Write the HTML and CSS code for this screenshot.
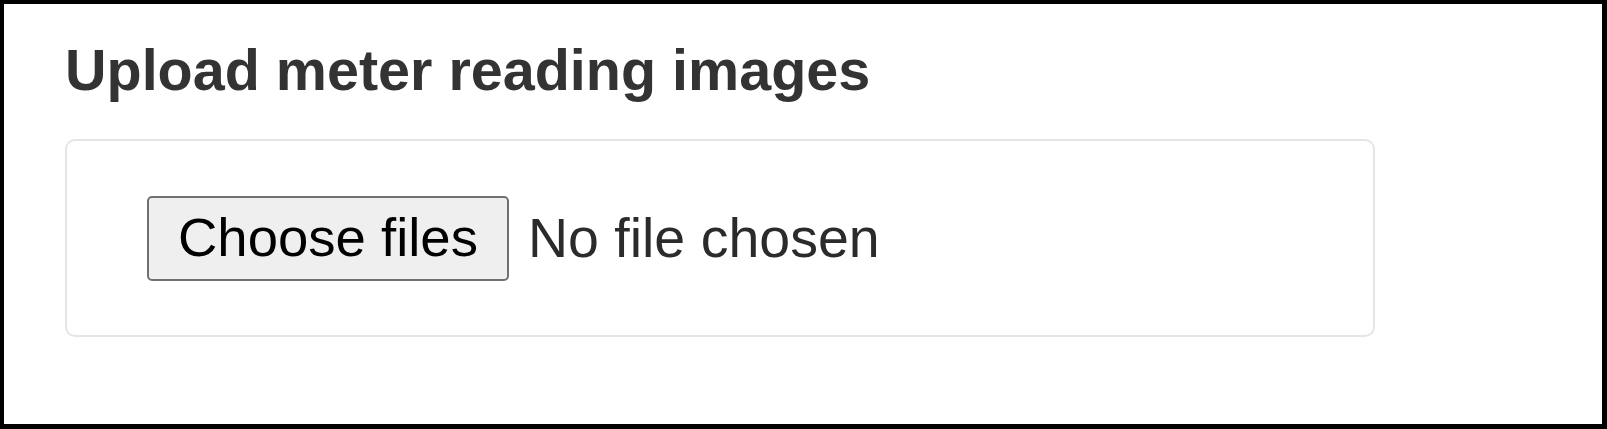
FILE: index.html
```html
<!DOCTYPE html>
<html lang="en">
<head>
  <meta charset="UTF-8" />
  <title>Upload meter reading images</title>
  <link rel="stylesheet" href="styles.css">
</head>
<body>

  <div class="frame">
    <!-- Heading -->
    <h2 class="upload-title">Upload meter reading images</h2>

    <!-- File picker box -->
    <div class="upload-box">
      <button type="button" class="choose-btn">Choose files</button>
      <span class="file-status">No file chosen</span>
    </div>
  </div>

</body>
</html>
```

FILE: styles.css
```css
body {
  margin: 0;
  background: #fff;
  font-family: "Liberation Sans", Arial, sans-serif;
}

/* Outer black frame round the whole shot */
.frame {
  width: 1607px;
  height: 429px;
  box-sizing: border-box;
  border: 4px solid #000;
  border-right-width: 5px;
  border-bottom-width: 5px;
  padding: 0 61px;
}

/* Heading */
.upload-title {
  margin: 33px 0 36px;
  font-size: 57.5px;
  font-weight: 700;
  line-height: 1.15;
  color: #333;
}

/* Rounded box that holds the file input */
.upload-box {
  display: flex;
  align-items: center;
  width: 1310px;
  height: 198px;
  box-sizing: border-box;
  border: 2px solid #e5e5e5;
  border-radius: 10px;
  padding-left: 80px;
}

/* Native-looking "Choose files" button */
.choose-btn {
  font-family: "Liberation Sans", Arial, sans-serif;
  font-size: 54.5px;
  line-height: 62px;
  padding: 9px 29px 10px;
  border: 2px solid #707070;
  border-radius: 5px;
  background: #efefef;
  color: #000;
}

.file-status {
  margin-left: 19px;
  font-size: 55.5px;
  color: #2b2b2b;
}
```
